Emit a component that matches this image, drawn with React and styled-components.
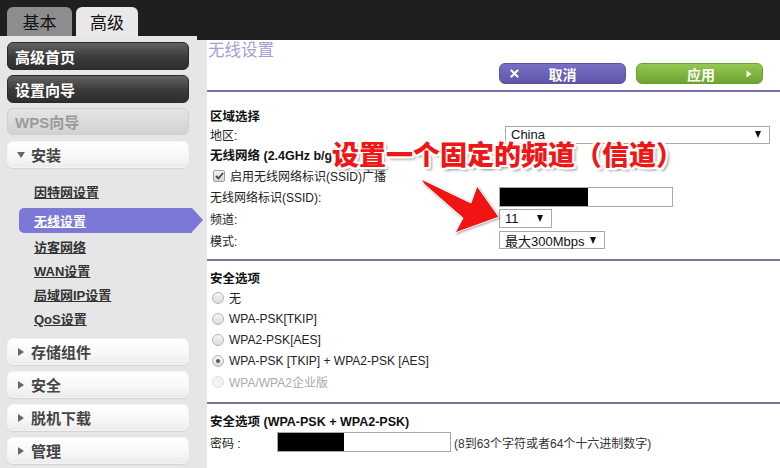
import React from 'react';
import styled, { createGlobalStyle, css } from 'styled-components';

const GlobalStyle = createGlobalStyle`
  html, body {
    margin: 0;
    padding: 0;
    background: #e6e6e6;
    font-family: "Liberation Sans", "Noto Sans CJK SC", sans-serif;
    font-size: 12px;
    color: #222;
  }
`;

const Page = styled.div`
  position: relative;
  width: 780px;
  height: 468px;
  overflow: hidden;
  background: #e6e6e6;
`;

const TopBar = styled.div`
  height: 36px;
  background: #1f1f1f;
  display: flex;
  align-items: flex-end;
  gap: 4px;
  padding-left: 7px;
`;

const Tab = styled.div`
  height: 29px;
  display: flex;
  align-items: center;
  justify-content: center;
  border-radius: 6px 6px 0 0;
  font-size: 17px;
  color: #111;
  font-family: "Noto Sans CJK SC", sans-serif;
  ${(p) =>
    p.active
      ? css`
          width: 62px;
          background: #e8e8e8;
        `
      : css`
          width: 65px;
          background: #8d8d8d;
        `}
`;

const Layout = styled.div`
  display: flex;
  height: 432px;
`;

const Sidebar = styled.div`
  width: 197px;
  flex-shrink: 0;
  padding: 6px 0 0 7px;
  box-sizing: border-box;
  display: flex;
  flex-direction: column;
`;

const NavButton = styled.div`
  width: 182px;
  height: 28px;
  flex-shrink: 0;
  box-sizing: border-box;
  border-radius: 6px;
  display: flex;
  align-items: center;
  padding-left: 7px;
  font-size: 15px;
  font-weight: 700;
  margin-bottom: ${(p) => p.mb ?? 5}px;
  ${(p) =>
    p.variant === 'dark' &&
    css`
      background: linear-gradient(#626262, #3a3a3a 55%, #2e2e2e);
      border: 1px solid #2a2a2a;
      color: #fff;
    `}
  ${(p) =>
    p.variant === 'disabled' &&
    css`
      height: 27px;
      background: linear-gradient(#e4e4e4, #d2d2d2);
      border: 1px solid #cfcfcf;
      color: #9a9a9a;
    `}
  ${(p) =>
    p.variant === 'light' &&
    css`
      height: 27px;
      padding-left: 9px;
      background: linear-gradient(#ffffff, #f7f7f7 60%, #ececec);
      border: 1px solid #f4f4f4;
      box-shadow: 0 1px 1px rgba(0, 0, 0, 0.08);
      color: #444;
    `}
`;

const Caret = styled.span`
  width: 0;
  height: 0;
  margin-right: 6px;
  ${(p) =>
    p.open
      ? css`
          border-left: 4px solid transparent;
          border-right: 4px solid transparent;
          border-top: 6px solid #666;
        `
      : css`
          border-top: 4px solid transparent;
          border-bottom: 4px solid transparent;
          border-left: 6px solid #666;
          margin-left: 1px;
          margin-right: 7px;
        `}
`;

const SubList = styled.div`
  display: flex;
  flex-direction: column;
  padding: 11px 0 8px;
`;

const SubItem = styled.div`
  height: ${(p) => (p.active ? 25 : 24)}px;
  flex-shrink: 0;
  margin: ${(p) => (p.active ? '5px 0 1px' : '0')};
  display: flex;
  align-items: center;
  font-weight: 700;
  font-size: 13px;
  text-decoration: underline;
  padding-left: 27px;
  color: #333;
  ${(p) =>
    p.active &&
    css`
      position: relative;
      margin-left: 12px;
      padding-left: 15px;
      width: 158px;
      color: #fff;
      background: #7c78d6;
      border-radius: 5px 0 0 5px;
      &::after {
        content: '';
        position: absolute;
        right: -11px;
        top: 0;
        border-top: 12.5px solid transparent;
        border-bottom: 12.5px solid transparent;
        border-left: 11px solid #7c78d6;
      }
    `}
`;

const RightCol = styled.div`
  flex: 1;
  border-top: 5px solid #1f1f1f;
  padding-left: 10px;
  margin-top: -1px;
`;

const Panel = styled.div`
  background: #fff;
  height: 100%;
`;

const Title = styled.div`
  height: 22px;
  line-height: 20px;
  padding-left: 1px;
  font-size: 16.5px;
  color: #a29fd4;
`;

const ActionBar = styled.div`
  display: flex;
  justify-content: flex-end;
  gap: 10px;
  padding: 1px 17px 6px 0;
`;

const ActionButton = styled.div`
  width: 127px;
  height: 21px;
  border-radius: 6px;
  display: flex;
  align-items: center;
  justify-content: space-between;
  box-sizing: border-box;
  padding: 0 10px;
  color: #fff;
  font-weight: 700;
  ${(p) =>
    p.tone === 'cancel'
      ? css`
          background: linear-gradient(#7770c4, #5d56a9);
          border: 1px solid #5a54a0;
        `
      : css`
          background: linear-gradient(#93c950, #6da332);
          border: 1px solid #6c9e34;
        `}
`;

const ButtonLabel = styled.span`
  flex: 1;
  text-align: center;
  font-family: "Noto Sans CJK SC", sans-serif;
  font-size: 14px;
`;

const Section = styled.div`
  border-top: 2px solid ${(p) => p.line || '#7a70ad'};
  padding: ${(p) => p.pad || '6px 0 10px'};
  padding-left: 3px;
`;

const Heading = styled.div`
  height: ${(p) => p.h || 20}px;
  display: flex;
  align-items: center;
  font-weight: 700;
  font-size: 12.5px;
  color: #111;
`;

const Row = styled.div`
  height: ${(p) => p.h || 21}px;
  display: grid;
  grid-template-columns: 289px 1fr;
  align-items: center;
`;

const Label = styled.div`
  color: #222;
`;

const Line = styled.div`
  height: 21px;
  display: flex;
  align-items: center;
  gap: 5px;
  color: ${(p) => (p.disabled ? '#aaa' : '#222')};
`;

const SelectBox = styled.div`
  width: ${(p) => p.w}px;
  height: ${(p) => p.h || 18}px;
  margin-left: ${(p) => p.ml || 0}px;
  box-sizing: border-box;
  border: 1px solid #a9a9a9;
  background: #fff;
  display: flex;
  align-items: center;
  justify-content: space-between;
  padding: 0 8px 0 5px;
  font-size: 13px;
  color: #111;
`;

const DownArrow = styled.span`
  width: 0;
  height: 0;
  border-left: 3.5px solid transparent;
  border-right: 3.5px solid transparent;
  border-top: 7px solid #111;
`;

const TextBox = styled.div`
  width: ${(p) => p.w}px;
  height: 20px;
  box-sizing: border-box;
  border: 1px solid #a9a9a9;
  background: #fff;
  display: flex;
`;

const Redacted = styled.div`
  width: ${(p) => p.w}px;
  background: #000;
`;

const CheckBox = styled.span`
  width: 12px;
  height: 12px;
  margin-left: 3px;
  box-sizing: border-box;
  border: 1px solid #9d9d9d;
  border-radius: 2px;
  background: linear-gradient(#f2f2f2, #d8d8d8);
  display: flex;
  align-items: center;
  justify-content: center;
`;

const Radio = styled.span`
  width: 12px;
  height: 12px;
  margin-left: 2px;
  box-sizing: border-box;
  border-radius: 50%;
  border: 1px solid ${(p) => (p.disabled ? '#dedede' : '#b5b5b5')};
  background: ${(p) =>
    p.disabled ? '#f3f3f3' : 'linear-gradient(#f6f6f6, #dcdcdc)'};
  display: flex;
  align-items: center;
  justify-content: center;
  &::after {
    content: '';
    display: ${(p) => (p.checked ? 'block' : 'none')};
    width: 4px;
    height: 4px;
    border-radius: 50%;
    background: #555;
  }
`;

const PasswordRow = styled.div`
  height: 24px;
  display: flex;
  align-items: center;
`;

const PasswordLabel = styled.div`
  width: 67px;
`;

const Hint = styled.span`
  margin-left: 3px;
  color: #333;
`;

const Callout = styled.div`
  position: absolute;
  left: 332px;
  top: 138px;
  font-family: "Noto Sans CJK SC", sans-serif;
  font-size: 27px;
  font-weight: 900;
  line-height: 32px;
  color: #f01616;
  white-space: nowrap;
  text-shadow: -2px -2px 0 #fff, 2px -2px 0 #fff, -2px 2px 0 #fff,
    2px 2px 0 #fff, 0 -2px 0 #fff, 0 2px 0 #fff, -2px 0 0 #fff, 2px 0 0 #fff,
    3px 3px 3px rgba(0, 0, 0, 0.45);
`;

const ArrowSvg = styled.svg`
  position: absolute;
  left: 0;
  top: 0;
  pointer-events: none;
  filter: drop-shadow(1px 1px 1px rgba(0, 0, 0, 0.35));
`;

const sidebarSub = ['因特网设置', '无线设置', '访客网络', 'WAN设置', '局域网IP设置', 'QoS设置'];
const radios = [
  { label: '无' },
  { label: 'WPA-PSK[TKIP]' },
  { label: 'WPA2-PSK[AES]' },
  { label: 'WPA-PSK [TKIP] + WPA2-PSK [AES]', checked: true },
  { label: 'WPA/WPA2企业版', disabled: true },
];

export default function App() {
  return (
    <>
      <GlobalStyle />
      <Page>
        <TopBar>
          <Tab>基本</Tab>
          <Tab active>高级</Tab>
        </TopBar>
        <Layout>
          <Sidebar>
            <NavButton variant="dark">高级首页</NavButton>
            <NavButton variant="dark">设置向导</NavButton>
            <NavButton variant="disabled" mb={6}>WPS向导</NavButton>
            <NavButton variant="light" mb={0}>
              <Caret open />
              安装
            </NavButton>
            <SubList>
              {sidebarSub.map((s) => (
                <SubItem key={s} active={s === '无线设置'}>
                  {s}
                </SubItem>
              ))}
            </SubList>
            <NavButton variant="light" mb={6}>
              <Caret />
              存储组件
            </NavButton>
            <NavButton variant="light" mb={6}>
              <Caret />
              安全
            </NavButton>
            <NavButton variant="light" mb={6}>
              <Caret />
              脱机下载
            </NavButton>
            <NavButton variant="light">
              <Caret />
              管理
            </NavButton>
          </Sidebar>

          <RightCol>
            <Panel>
              <Title>无线设置</Title>
              <ActionBar>
                <ActionButton tone="cancel">
                  <svg width="9" height="9" viewBox="0 0 9 9">
                    <path d="M1.5 1.5 L7.5 7.5 M7.5 1.5 L1.5 7.5" stroke="#fff" strokeWidth="2.2" strokeLinecap="round" />
                  </svg>
                  <ButtonLabel>取消</ButtonLabel>
                  <span style={{ width: 9 }} />
                </ActionButton>
                <ActionButton tone="apply">
                  <span style={{ width: 9 }} />
                  <ButtonLabel>应用</ButtonLabel>
                  <svg width="6" height="8" viewBox="0 0 6 8">
                    <path d="M0.5 0.5 L5.5 4 L0.5 7.5 Z" fill="#fff" />
                  </svg>
                </ActionButton>
              </ActionBar>

              <Section pad="13px 0 8px">
                <Heading>区域选择</Heading>
                <Row h={19}>
                  <Label>地区:</Label>
                  <SelectBox w={265} ml={6}>
                    China
                    <DownArrow />
                  </SelectBox>
                </Row>
                <Heading h={21}>无线网络 (2.4GHz b/g</Heading>
                <Line>
                  <CheckBox>
                    <svg width="9" height="8" viewBox="0 0 9 8">
                      <path d="M1 4 L3.5 6.5 L8 1" fill="none" stroke="#444" strokeWidth="1.8" />
                    </svg>
                  </CheckBox>
                  启用无线网络标识(SSID)广播
                </Line>
                <Row>
                  <Label>无线网络标识(SSID):</Label>
                  <TextBox w={174}>
                    <Redacted w={88} />
                  </TextBox>
                </Row>
                <Row h={22}>
                  <Label>频道:</Label>
                  <SelectBox w={53} h={19}>
                    11
                    <DownArrow />
                  </SelectBox>
                </Row>
                <Row h={22}>
                  <Label>模式:</Label>
                  <SelectBox w={106}>
                    最大300Mbps
                    <DownArrow />
                  </SelectBox>
                </Row>
              </Section>

              <Section line="#7b7399">
                <Heading>安全选项</Heading>
                {radios.map((r) => (
                  <Line key={r.label} disabled={r.disabled}>
                    <Radio checked={r.checked} disabled={r.disabled} />
                    {r.label}
                  </Line>
                ))}
              </Section>

              <Section line="#7b7399">
                <Heading>安全选项 (WPA-PSK + WPA2-PSK)</Heading>
                <PasswordRow>
                  <PasswordLabel>密码 :</PasswordLabel>
                  <TextBox w={174}>
                    <Redacted w={66} />
                  </TextBox>
                  <Hint>(8到63个字符或者64个十六进制数字)</Hint>
                </PasswordRow>
              </Section>
            </Panel>
          </RightCol>
        </Layout>

        <Callout>设置一个固定的频道（信道）</Callout>
        <ArrowSvg width="780" height="468" viewBox="0 0 780 468">
          <path
            d="M421 179 L471 203 L477 186 L499 217 L455 233 L463 218 L424 184 Z"
            fill="#f01414"
            stroke="#fff"
            strokeWidth="1"
            strokeLinejoin="round"
          />
        </ArrowSvg>
      </Page>
    </>
  );
}
